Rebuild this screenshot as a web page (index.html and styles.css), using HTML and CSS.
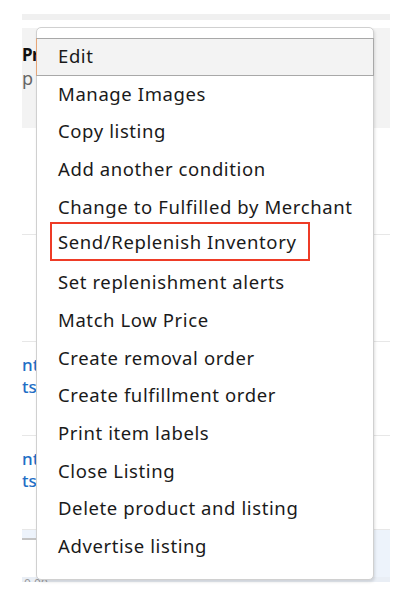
FILE: index.html
```html
<!DOCTYPE html>
<html lang="en">
<head>
  <meta charset="UTF-8" />
  <meta name="viewport" content="width=device-width, initial-scale=1.0"/>
  <title>Inventory - Listing actions</title>
  <link rel="stylesheet" href="styles.css">
</head>
<body>

  <div class="page">
    <div class="table">
      <div class="table-band"></div>
      <div class="table-head">
        <div class="head-title">Pr</div>
        <div class="head-sub">p</div>
      </div>
      <div class="table-row row-tall"></div>
      <div class="table-row row-tall"></div>
      <div class="table-row">
        <a class="row-link" href="#">nt</a>
        <a class="row-link" href="#">ts</a>
      </div>
      <div class="table-row">
        <a class="row-link" href="#">nt</a>
        <a class="row-link" href="#">ts</a>
      </div>
      <div class="table-row row-selected">
        <div class="selected-cell"></div>
      </div>
      <div class="table-foot">0.00</div>
    </div>

    <ul class="menu">
      <li class="menu-item is-active">Edit</li>
      <li class="menu-item">Manage Images</li>
      <li class="menu-item">Copy listing</li>
      <li class="menu-item">Add another condition</li>
      <li class="menu-item">Change to Fulfilled by Merchant</li>
      <li class="menu-item"><span class="callout">Send/Replenish Inventory</span></li>
      <li class="menu-item">Set replenishment alerts</li>
      <li class="menu-item">Match Low Price</li>
      <li class="menu-item">Create removal order</li>
      <li class="menu-item">Create fulfillment order</li>
      <li class="menu-item">Print item labels</li>
      <li class="menu-item">Close Listing</li>
      <li class="menu-item">Delete product and listing</li>
      <li class="menu-item">Advertise listing</li>
    </ul>
  </div>

</body>
</html>
```

FILE: styles.css
```css
body {
  margin: 0;
  background-color: #ffffff;
  color: #111;
  font-family: 'Noto Sans', 'Open Sans', sans-serif;
}

.page {
  position: relative;
  width: 400px;
  height: 602px;
  overflow: hidden;
}

/* table behind the dropdown */
.table {
  margin-left: 22px;
  width: 368px;
  padding-top: 14px;
}

.table-band {
  height: 6px;
  background-color: #f0f0f0;
  margin-bottom: 8px;
}

.table-head {
  height: 100px;
  background-color: #f3f3f3;
  padding-top: 14px;
  box-sizing: border-box;
}

.head-title {
  font-weight: 700;
  font-size: 17px;
  line-height: 25px;
  letter-spacing: -0.5px;
}

.head-sub {
  color: #666;
  font-size: 18px;
  line-height: 22px;
}

.table-row {
  height: 94px;
  border-bottom: 1px solid #e7e7e7;
  padding-top: 12px;
  box-sizing: border-box;
}

.row-tall {
  height: 107px;
}

.row-link {
  display: block;
  width: max-content;
  color: #1f6fc5;
  font-size: 17px;
  font-weight: 500;
  line-height: 22px;
  text-decoration: none;
}

.row-selected {
  height: 47px;
  padding-top: 8px;
  border-bottom: none;
  background-color: #edf3fb;
}

.selected-cell {
  width: 14px;
  height: 39px;
  background-color: #fff;
  border-top: 2px solid #c4c4c4;
}

.table-foot {
  height: 5px;
  overflow: hidden;
  background-color: #e9eef5;
  font-size: 12px;
  line-height: 14px;
  color: #999;
  padding-left: 2px;
}

/* the actions dropdown */
.menu {
  position: absolute;
  left: 36px;
  top: 27px;
  width: 338px;
  margin: 0;
  padding: 10px 0 13px;
  list-style: none;
  box-sizing: border-box;
  background-color: #fff;
  border: 1px solid #d0d0d0;
  border-radius: 5px;
  box-shadow: 1px 2px 3px rgba(0, 0, 0, 0.12);
}

.menu-item {
  box-sizing: border-box;
  height: 37.7px;
  line-height: 35px;
  padding-left: 21px;
  font-size: 18.5px;
  letter-spacing: 0.6px;
  color: #1a1a1a;
  white-space: nowrap;
}

.menu-item.is-active {
  background-color: #f3f3f3;
  border: 1px solid #a8a8a8;
  border-left-color: #e6a577;
  margin: 0 -1px;
  line-height: 33px;
}

.callout {
  display: inline-block;
  vertical-align: top;
  margin: -4px 0 0 -8px;
  padding: 0 12px 0 6px;
  line-height: 35px;
  border: 2px solid #ee3b26;
}
```
